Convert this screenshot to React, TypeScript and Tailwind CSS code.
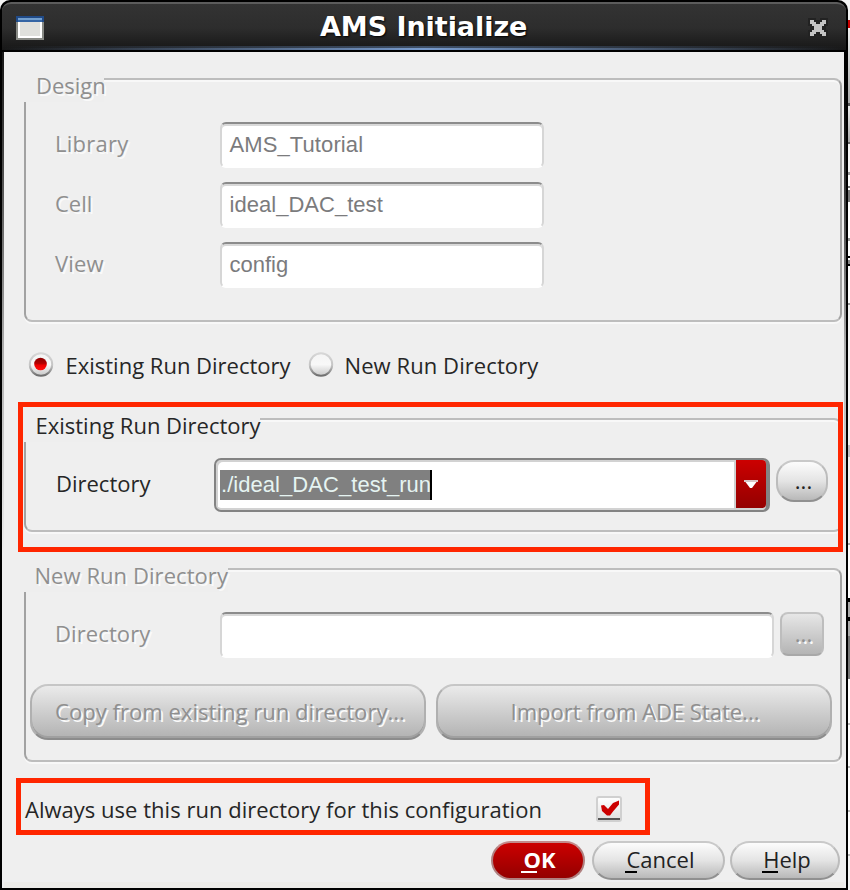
import type { ReactNode } from "react";

const UI = "font-['Open_Sans','Noto_Sans',sans-serif] text-[22px] leading-[30px] whitespace-pre";
const ENTRY = "font-['Liberation_Sans',Arial,sans-serif] text-[22px] leading-[30px] whitespace-pre";
const EMBOSS = "text-[#8f8f8f] [text-shadow:2px_2px_0_#fafafa]";

function Label({ children, className = "" }: { children: ReactNode; className?: string }) {
  return <span className={`${UI} block shrink-0 ${className}`}>{children}</span>;
}

function Group({ legend, legendClass, className, children }: { legend: string; legendClass: string; className: string; children: ReactNode }) {
  return (
    <div className={`w-[818px] shrink-0 rounded-[8px] border-2 border-x-[#a2a2a2] border-y-[#bdbdbd] shadow-[0_2px_0_#f8f8f8,inset_0_2px_0_#f8f8f8] ${className}`}>
      <div className={`-mt-[10px] -ml-[6px] h-8 bg-[#eeeeee] ${legendClass}`}>
        <Label>{legend}</Label>
      </div>
      {children}
    </div>
  );
}

function Entry({ value, className }: { value: string; className: string }) {
  return (
    <div className={`flex h-[46px] shrink-0 items-start rounded-[6px] border-2 border-x-[#d6d6d6] border-t-[#8c8c8c] border-b-white bg-white pt-[6px] pl-[7.5px] text-[#7b7b7d] shadow-[inset_0_2px_0_#d9d9d9] ${className}`}>
      <span className={ENTRY}>{value}</span>
    </div>
  );
}

function Row({ label, value, tracking, entryTracking }: { label: string; value: string; tracking: string; entryTracking: string }) {
  return (
    <div className="flex h-[46px]">
      <Label className={`w-[165px] pt-[6px] ${EMBOSS} ${tracking}`}>{label}</Label>
      <Entry value={value} className={`w-[324px] ${entryTracking}`} />
    </div>
  );
}

function Radio({ on = false }: { on?: boolean }) {
  return (
    <svg className="block h-[26px] w-[26px] shrink-0" viewBox="0 0 26 26">
      <defs>
        <linearGradient id="radioEdge" x1="0" y1="0" x2="0" y2="1">
          <stop offset="0" stopColor="#d6d6d6" />
          <stop offset="0.55" stopColor="#c4c4c4" />
          <stop offset="1" stopColor="#6e6e6e" />
        </linearGradient>
        <linearGradient id="radioFace" x1="0" y1="0" x2="0" y2="1">
          <stop offset="0" stopColor="#f4f4f4" />
          <stop offset="0.5" stopColor="#f8f8f8" />
          <stop offset="1" stopColor="#c8c8c8" />
        </linearGradient>
        <linearGradient id="radioDot" x1="0" y1="0" x2="0" y2="1">
          <stop offset="0" stopColor="#8c0000" />
          <stop offset="0.45" stopColor="#b40000" />
          <stop offset="0.6" stopColor="#f00000" />
          <stop offset="1" stopColor="#ff1010" />
        </linearGradient>
      </defs>
      <circle cx="13" cy="13.5" r="11.2" fill="url(#radioFace)" stroke="url(#radioEdge)" strokeWidth="2" />
      {on && <circle cx="12.5" cy="13" r="6.3" fill="url(#radioDot)" />}
    </svg>
  );
}

function WindowIcon() {
  return (
    <svg className="block h-6 w-7" viewBox="0 0 28 24" shapeRendering="crispEdges">
      <rect width="28" height="24" fill="#888a85" />
      <rect width="28" height="6" fill="#204a87" />
      <rect x="2" y="2" width="24" height="20" fill="#ffffff" />
      <rect x="2" y="2" width="24" height="2" fill="#729fcf" />
      <rect x="2" y="4" width="24" height="2" fill="#3465a4" />
      <rect x="4" y="6" width="20" height="14" fill="#dfe0dc" />
    </svg>
  );
}

function CloseIcon() {
  return (
    <svg className="block h-5 w-5" viewBox="0 0 20 20" shapeRendering="crispEdges">
      <path d="M0 0h8v2h4V0h8v8h-2v4h2v8h-8v-2H8v2H0v-8h2V8H0z" fill="#222222" />
      <path d="M2 2h4v2h2v2h4V4h2V2h4v4h-2v2h-2v4h2v2h2v4h-4v-2h-2v-2H8v2H6v2H2v-4h2v-2h2V8H4V6H2z" fill="#c4c4c4" />
    </svg>
  );
}

function Check() {
  return (
    <svg className="block h-[26px] w-[26px]" viewBox="0 0 26 26">
      <defs>
        <linearGradient id="checkFace" x1="0" y1="0" x2="0" y2="1">
          <stop offset="0" stopColor="#ffffff" />
          <stop offset="1" stopColor="#dedede" />
        </linearGradient>
      </defs>
      <rect x="1" y="1" width="24" height="24" rx="2" fill="url(#checkFace)" stroke="#d0d0d0" strokeWidth="2" />
      <rect x="2" y="22" width="22" height="2" fill="#555555" />
      <path d="M5 9.5l3-.5 4 4 5-6 6-2.500v4l-6 7-3 4h-3l-5-4.500z" fill="#cc0000" />
    </svg>
  );
}

const PILL = "border-2 border-x-[#bcbcbc] border-t-[#c9c9c9] border-b-[#909090] bg-linear-to-b from-white via-[#e4e4e4] to-[#b4b4b4] bg-origin-border text-[#222]";
const WIDE = "flex h-14 shrink-0 justify-center rounded-[18px] border-2 border-x-[#b0b0b0] border-t-[#c6c6c6] border-b-[#8c8c8c] bg-linear-to-b from-[#ededed] to-[#b0b0b0] bg-origin-border pt-[10px] shadow-[inset_0_-2px_0_#a0a0a0]";

function Mnemonic({ first, rest, bar }: { first: string; rest: string; bar: string }) {
  return (
    <span className={`${UI} block`}>
      <span className="relative">
        {first}
        <span className={`absolute top-[27px] h-[2px] ${bar}`} />
      </span>
      {rest}
    </span>
  );
}

export default function App() {
  return (
    <div className="flex h-[890px] w-[850px] overflow-hidden bg-[#f4f4f4]">
      <div className="flex h-[890px] w-[848px] shrink-0 flex-col overflow-hidden rounded-t-[10px] bg-black px-[2px] pt-[2px] pb-[2px]">
        <div className="flex h-[50px] shrink-0 flex-col rounded-t-[9px] border-t-2 border-[#5c5c5c] bg-linear-to-b from-[#333] via-[#2d2d2d] to-[#151515]">
          <div className="flex h-[42px] items-start pr-[18px] pl-[14px]">
            <div className="w-[304px] pt-3"><WindowIcon /></div>
            <div className="w-[488px] pt-[5px] font-['DejaVu_Sans',sans-serif] text-[27px] leading-[36px] font-bold tracking-[-0.05px] whitespace-pre text-white [text-shadow:1px_1px_2px_#000]">AMS Initialize</div>
            <div className="pt-[14px]"><CloseIcon /></div>
          </div>
          <div className="h-[2px] bg-linear-to-r from-transparent via-[#3f5068] to-transparent" />
          <div className="h-[2px] bg-linear-to-r from-transparent via-[#789bcd] to-transparent" />
          <div className="h-[2px] bg-black" />
        </div>

        <div className="flex h-[836px] shrink-0">
          <div className="w-[2px] shrink-0 bg-linear-to-b from-[#161616] via-[#aaa] via-35% to-[#efefef] to-60%" />
          <div className="flex w-[840px] shrink-0 flex-col bg-[#efefef] text-[#262626]">
            <div className="flex flex-col pt-[26px] pl-5">
              <Group legend="Design" legendClass={`w-[84px] pl-4 ${EMBOSS}`} className="h-[244px]">
                <div className="flex flex-col gap-[14px] pt-5 pl-[29px]">
                  <Row label="Library" value="AMS_Tutorial" tracking="tracking-[0.25px]" entryTracking="tracking-[0.1px]" />
                  <Row label="Cell" value="ideal_DAC_test" tracking="" entryTracking="tracking-[0.03px]" />
                  <Row label="View" value="config" tracking="tracking-[0.2px]" entryTracking="" />
                </div>
              </Group>

              <div className="flex h-[96px] items-start pt-[29px] pl-1">
                <div className="flex w-[280px]">
                  <Radio on />
                  <Label className="-mt-[1px] pl-[11.5px]">Existing Run Directory</Label>
                </div>
                <Radio />
                <Label className="-mt-[1px] pl-[10.5px] tracking-[0.08px]">New Run Directory</Label>
              </div>

              <div className="relative">
                <Group legend="Existing Run Directory" legendClass="w-[240px] pl-[15.5px]" className="h-[114px]">
                  <div className="flex pt-4 pl-[30px]">
                    <Label className="w-[158px] pt-[10px]">Directory</Label>
                    <div className="flex h-[54px] w-[556px] shrink-0 rounded-[7px] border-2 border-r-4 border-[#838383] bg-white shadow-[inset_2px_2px_0_#d2d2d2,inset_0_-2px_0_#d2d2d2]">
                      <div className="flex w-[520px] items-start border-r-2 border-[#cfcfcf] pt-[10px] pl-1">
                        <div className="flex h-[30px] w-[212px] overflow-hidden border-r-2 border-black bg-[#808080] pl-[1px] text-[#e6f4f2]">
                          <span className={`${ENTRY} tracking-[0.05px]`}>./ideal_DAC_test_run</span>
                        </div>
                      </div>
                      <div className="flex h-[48px] w-[30px] items-start justify-center rounded-r-[4px] bg-linear-to-b from-[#cc0000] to-[#940000] pt-5">
                        <svg className="block h-2 w-[14px]" viewBox="0 0 14 8">
                          <path d="M0 0h14v2H0z" fill="#d8c4c4" />
                          <path d="M1.500 2h11L8 8H6z" fill="#ffffff" />
                        </svg>
                      </div>
                    </div>
                    <div className={`mt-[2px] ml-[6px] flex h-[42px] w-[52px] shrink-0 justify-center rounded-[18px] pt-[3px] pl-[3px] ${PILL}`}>
                      <Label>...</Label>
                    </div>
                  </div>
                </Group>
                <div className="absolute -top-4 -left-[6px] h-[150px] w-[825px] border-[5px] border-[#ff2600]" />
              </div>

              <Group legend="New Run Directory" legendClass={`w-[208px] pl-[14.5px] tracking-[0.06px] ${EMBOSS}`} className="mt-9 h-[194px]">
                <div className="flex pt-5 pl-[30px]">
                  <Label className={`-ml-[1px] w-[165px] pt-[6px] tracking-[0.1px] ${EMBOSS}`}>Directory</Label>
                  <Entry value="" className="w-[554px]" />
                  <div className={`ml-[6px] flex h-11 w-11 shrink-0 justify-center rounded-[8px] border-2 border-x-[#bdbdbd] border-t-[#c4c4c4] border-b-[#a8a8a8] bg-linear-to-b from-[#e9e9e9] to-[#b2b2b2] bg-origin-border pt-[4px] pl-[3px] ${EMBOSS}`}>
                    <Label>...</Label>
                  </div>
                </div>
                <div className="flex gap-[10px] pt-[26px] pl-1">
                  <div className={`w-[396px] pl-1 ${WIDE} ${EMBOSS}`}><Label className="tracking-[0.04px]">Copy from existing run directory...</Label></div>
                  <div className={`w-[396px] pl-[2px] ${WIDE} ${EMBOSS}`}><Label>Import from ADE State...</Label></div>
                </div>
              </Group>

              <div className="mt-4 -ml-2 flex h-[57px] w-[634px] shrink-0 items-start border-[5px] border-[#ff2600] pl-1">
                <Label className="w-[571px] pt-[11px] tracking-[0.02px]">Always use this run directory for this configuration</Label>
                <div className="pt-[13px]"><Check /></div>
              </div>
            </div>

            <div className="flex h-[47px] shrink-0 items-start justify-end gap-[5px] pt-[6px] pr-1">
              <div className="mr-[2px] flex h-[39px] w-[94px] justify-center rounded-[20px] border-2 border-[#b08080] border-t-[#c48a8a] bg-linear-to-b from-[#cc0000] to-[#940000] pt-[1px] pl-[3px] font-bold text-white">
                <Mnemonic first="O" rest="K" bar="-left-[2px] w-4 bg-white" />
              </div>
              <div className={`flex h-[39px] w-[133px] justify-center rounded-[20px] pt-[1px] pl-1 ${PILL}`}>
                <Mnemonic first="C" rest="ancel" bar="-left-[1px] w-3 bg-black" />
              </div>
              <div className={`flex h-[39px] w-[110px] justify-center rounded-[20px] pt-[1px] pl-1 ${PILL}`}>
                <Mnemonic first="H" rest="elp" bar="-left-[1px] w-4 bg-black" />
              </div>
            </div>
            <div className="h-[6px] shrink-0 bg-[#ecebe8]" />
          </div>
          <div className="w-[2px] shrink-0 bg-linear-to-b from-[#000] via-[#aaa] via-35% to-[#efefef] to-60%" />
        </div>
      </div>

      {/* sliver of the window behind the dialog */}
      <div className="flex w-[2px] shrink-0 flex-col">
        <div className="h-5 bg-[#f4f4f4]" />
        <div className="h-2 bg-[#cc0000]" />
        <div className="h-[75px] bg-linear-to-b from-[#f0f0f0] to-[#aaa]" />
        <div className="h-[3px] bg-[#555]" />
        <div className="h-9 bg-linear-to-b from-[#eee] to-[#aaa]" />
        <div className="h-[2px] bg-[#666]" />
        <div className="h-[28px] bg-[#f4f4f4]" />
        <div className="h-[3px] bg-[#999]" />
        <div className="h-[11px] bg-white" />
        <div className="h-[2px] bg-[#777]" />
        <div className="h-[2px] bg-white" />
        <div className="h-3 bg-[#777]" />
        <div className="h-9 bg-white" />
        <div className="h-[3px] bg-[#999]" />
        <div className="h-[15px] bg-white" />
        <div className="h-[2px] bg-black" />
        <div className="h-[2px] bg-white" />
        <div className="h-1 bg-[#888]" />
        <div className="h-[2px] bg-black" />
        <div className="h-[37px] bg-white" />
        <div className="h-[2px] bg-[#999]" />
        <div className="h-[140px] bg-[#f4f4f4]" />
        <div className="h-[12px] bg-[#c2c2c8]" />
        <div className="h-[86px] bg-[#f4f4f4]" />
        <div className="h-[2px] bg-[#aaa]" />
        <div className="h-[53px] bg-white" />
        <div className="h-1 bg-black" />
        <div className="h-[15px] bg-[#aaa]" />
        <div className="h-1 bg-black" />
        <div className="h-[15px] bg-[#aaa]" />
        <div className="h-[43px] bg-[#777]" />
        <div className="h-11 bg-white" />
        <div className="h-[2px] bg-[#bbb]" />
        <div className="h-[41px] bg-white" />
        <div className="h-[2px] bg-[#bbb]" />
        <div className="h-[42px] bg-white" />
        <div className="h-[2px] bg-[#bbb]" />
        <div className="h-[42px] bg-white" />
        <div className="h-[2px] bg-[#bbb]" />
      </div>
    </div>
  );
}
